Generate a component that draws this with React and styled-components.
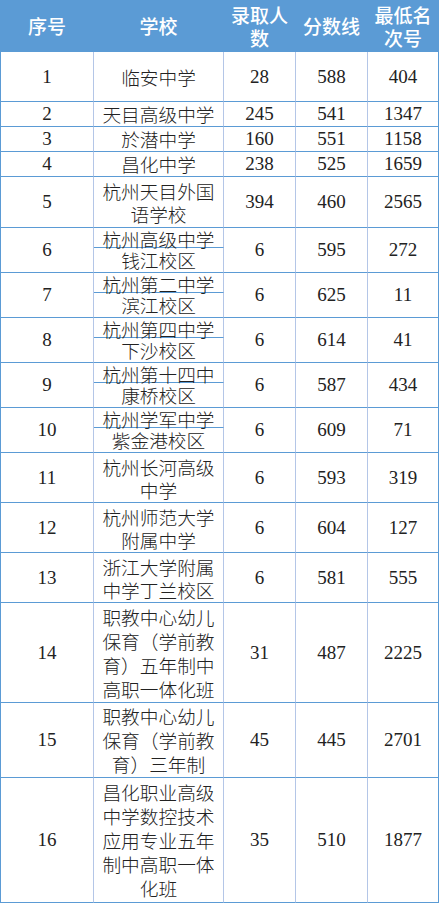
import { createGlobalStyle, styled } from 'styled-components';

const BLUE = '#5B9BD5';
const LIGHT = '#B4C6E7';

const rows = [
  { no: 1, school: ['临安中学'], count: 28, score: 588, rank: 404, h: 50 },
  { no: 2, school: ['天目高级中学'], count: 245, score: 541, rank: 1347, h: 25 },
  { no: 3, school: ['於潜中学'], count: 160, score: 551, rank: 1158, h: 25 },
  { no: 4, school: ['昌化中学'], count: 238, score: 525, rank: 1659, h: 25 },
  { no: 5, school: ['杭州天目外国', '语学校'], count: 394, score: 460, rank: 2565, h: 51 },
  { no: 6, split: ['杭州高级中学', '钱江校区'], count: 6, score: 595, rank: 272 },
  { no: 7, split: ['杭州第二中学', '滨江校区'], count: 6, score: 625, rank: 11 },
  { no: 8, split: ['杭州第四中学', '下沙校区'], count: 6, score: 614, rank: 41 },
  { no: 9, split: ['杭州第十四中', '康桥校区'], count: 6, score: 587, rank: 434 },
  { no: 10, split: ['杭州学军中学', '紫金港校区'], count: 6, score: 609, rank: 71 },
  { no: 11, school: ['杭州长河高级', '中学'], count: 6, score: 593, rank: 319, h: 50 },
  { no: 12, school: ['杭州师范大学', '附属中学'], count: 6, score: 604, rank: 127, h: 50 },
  { no: 13, school: ['浙江大学附属', '中学丁兰校区'], count: 6, score: 581, rank: 555, h: 50 },
  { no: 14, school: ['职教中心幼儿', '保育（学前教', '育）五年制中', '高职一体化班'], count: 31, score: 487, rank: 2225, h: 100 },
  { no: 15, school: ['职教中心幼儿', '保育（学前教', '育）三年制'], count: 45, score: 445, rank: 2701, h: 75 },
  { no: 16, school: ['昌化职业高级', '中学数控技术', '应用专业五年', '制中高职一体', '化班'], count: 35, score: 510, rank: 1877, h: 125 },
];

export default function App() {
  return (
    <>
      <GlobalStyle />
      <Table>
        <colgroup>
          <col style={{ width: 93 }} />
          <col style={{ width: 130 }} />
          <col style={{ width: 72 }} />
          <col style={{ width: 72 }} />
          <col style={{ width: 71 }} />
        </colgroup>
        <thead>
          <Row $h={52}>
            <Head>序号</Head>
            <Head>学校</Head>
            <Head>录取人<br />数</Head>
            <Head>分数线</Head>
            <Head>最低名<br />次号</Head>
          </Row>
        </thead>
        <tbody>
          {rows.map(r =>
            r.split ? (
              <SplitRows key={r.no} r={r} />
            ) : (
              <Row key={r.no} $h={r.h}>
                <Num>{r.no}</Num>
                <School $lines={r.school.length}>
                  {r.school.map(line => <Line key={line}>{line}</Line>)}
                </School>
                <Num>{r.count}</Num>
                <Num>{r.score}</Num>
                <Num $last>{r.rank}</Num>
              </Row>
            )
          )}
        </tbody>
      </Table>
    </>
  );
}

function SplitRows({ r }) {
  return (
    <>
      <Row $h={20}>
        <Num rowSpan={2}>{r.no}</Num>
        <School $inner>
          <Line>{r.split[0]}</Line>
        </School>
        <Num rowSpan={2}>{r.count}</Num>
        <Num rowSpan={2}>{r.score}</Num>
        <Num rowSpan={2} $last>{r.rank}</Num>
      </Row>
      <Row $h={25}>
        <School $lines={1}>
          <Line>{r.split[1]}</Line>
        </School>
      </Row>
    </>
  );
}

const GlobalStyle = createGlobalStyle`
  * { box-sizing: border-box; }
  body {
    margin: 0;
    background: #fff;
  }
`;

const Table = styled.table`
  width: 438px;
  table-layout: fixed;
  border-collapse: separate;
  border-spacing: 0;
  border-left: 1px solid ${BLUE};
  font-family: "Liberation Serif", "Noto Sans CJK SC", serif;
  color: #222;
`;

const Row = styled.tr`
  height: ${p => p.$h}px;
`;

const Head = styled.th`
  height: 52px;
  padding: 0;
  background: ${BLUE};
  color: #fff;
  font-family: "Noto Sans CJK SC", sans-serif;
  font-weight: 500;
  font-size: 19px;
  line-height: 23px;
  text-align: center;
  vertical-align: middle;
  border-bottom: 1px solid ${BLUE};
  border-right: 1px solid ${BLUE};
`;

const Cell = styled.td`
  padding: 0;
  text-align: center;
  vertical-align: middle;
  border-bottom: 1px solid ${BLUE};
  border-right: 1px solid ${p => (p.$last ? BLUE : LIGHT)};
`;

const Num = styled(Cell)`
  font-size: 19px;
  line-height: 22px;
`;

const School = styled(Cell)`
  font-family: "Noto Sans CJK SC", sans-serif;
  font-weight: 300;
  font-size: 18.7px;
  line-height: ${p => (p.$inner ? '16px' : p.$lines === 2 ? '23px' : '24px')};
  padding-top: ${p => (p.$inner ? '3px' : '0')};
  white-space: nowrap;
`;

const Line = styled.span`
  display: block;
`;
